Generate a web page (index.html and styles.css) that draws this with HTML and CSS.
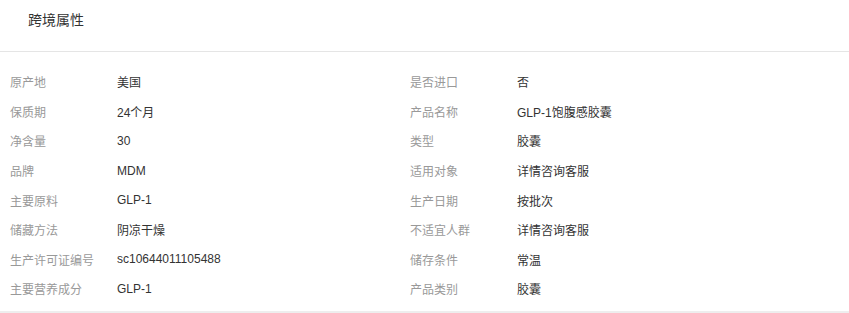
FILE: index.html
```html
<!DOCTYPE html>
<html>
<head>
  <meta charset="UTF-8">
  <title>跨境属性</title>
  <link rel="stylesheet" href="styles.css">
</head>
<body>
  <div class="panel">
    <div class="panel-header">
      <h2 class="panel-title">跨境属性</h2>
    </div>

    <div class="attr-list">
      <div class="attr-item"><span class="attr-label">原产地</span><span class="attr-value">美国</span></div>
      <div class="attr-item"><span class="attr-label">是否进口</span><span class="attr-value">否</span></div>
      <div class="attr-item"><span class="attr-label">保质期</span><span class="attr-value">24个月</span></div>
      <div class="attr-item"><span class="attr-label">产品名称</span><span class="attr-value">GLP-1饱腹感胶囊</span></div>
      <div class="attr-item"><span class="attr-label">净含量</span><span class="attr-value">30</span></div>
      <div class="attr-item"><span class="attr-label">类型</span><span class="attr-value">胶囊</span></div>
      <div class="attr-item"><span class="attr-label">品牌</span><span class="attr-value">MDM</span></div>
      <div class="attr-item"><span class="attr-label">适用对象</span><span class="attr-value">详情咨询客服</span></div>
      <div class="attr-item"><span class="attr-label">主要原料</span><span class="attr-value">GLP-1</span></div>
      <div class="attr-item"><span class="attr-label">生产日期</span><span class="attr-value">按批次</span></div>
      <div class="attr-item"><span class="attr-label">储藏方法</span><span class="attr-value">阴凉干燥</span></div>
      <div class="attr-item"><span class="attr-label">不适宜人群</span><span class="attr-value">详情咨询客服</span></div>
      <div class="attr-item"><span class="attr-label">生产许可证编号</span><span class="attr-value">sc10644011105488</span></div>
      <div class="attr-item"><span class="attr-label">储存条件</span><span class="attr-value">常温</span></div>
      <div class="attr-item"><span class="attr-label">主要营养成分</span><span class="attr-value">GLP-1</span></div>
      <div class="attr-item"><span class="attr-label">产品类别</span><span class="attr-value">胶囊</span></div>
    </div>
  </div>
</body>
</html>
```

FILE: styles.css
```css
body {
  font-family: "Liberation Sans", "Noto Sans CJK SC", sans-serif;
  margin: 0;
  background: #eeeeee;
}

.panel {
  background: white;
  height: 311px;
  box-sizing: border-box;
}

.panel-header {
  height: 52px;
  padding: 10px 28px 0;
  box-sizing: border-box;
  border-bottom: 1px solid #e5e5e5;
}

.panel-title {
  margin: 0;
  font-size: 14px;
  font-weight: normal;
  line-height: 20px;
  color: #333;
}

.attr-list {
  display: grid;
  grid-template-columns: 400px 400px;
  grid-auto-rows: 29.6px;
  padding: 15px 10px 8px;
}

.attr-item {
  display: flex;
  align-items: center;
  font-size: 12px;
}

.attr-label {
  width: 107px;
  flex-shrink: 0;
  color: #999;
}

.attr-value {
  color: #333;
}
```
